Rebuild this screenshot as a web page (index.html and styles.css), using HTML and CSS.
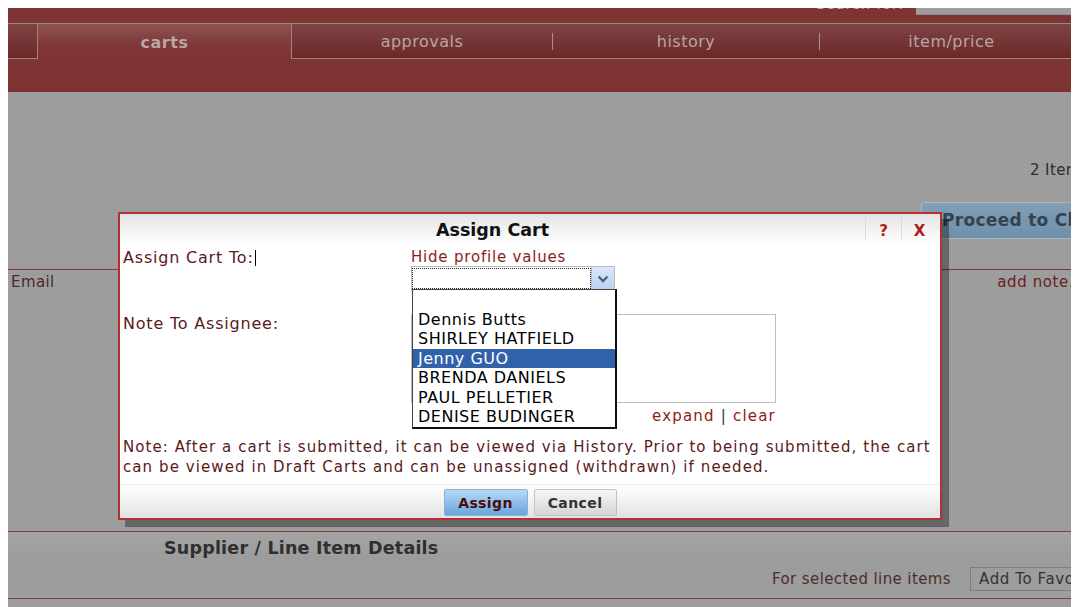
FILE: index.html
```html
<!DOCTYPE html>
<html lang="en">
<head>
<meta charset="utf-8">
<title>Carts</title>
<link rel="stylesheet" href="styles.css">
</head>
<body>
<div class="page">
  <header class="masthead">
    <div class="search-row">
      <span class="search-label">Search for:</span>
      <span class="search-box"></span>
    </div>
    <nav class="tabs">
      <span class="tab-stub"></span>
      <a class="tab tab-active">carts</a>
      <div class="tab-group">
        <a class="tab tab-approvals">approvals</a>
        <span class="tab-sep"></span>
        <a class="tab tab-history">history</a>
        <span class="tab-sep"></span>
        <a class="tab tab-price">item/price</a>
      </div>
    </nav>
  </header>

  <main class="content">
    <div class="cart-top">
      <div class="cart-aside">
        <div class="cart-summary">2 Items</div>
        <button class="proceed-btn">Proceed to Checkout</button>
      </div>
    </div>
    <div class="cart-fields">
      <span class="field-name">Email</span>
      <a class="add-note">add note...</a>
    </div>
    <section class="line-items">
      <h2 class="line-items-title">Supplier / Line Item Details</h2>
      <div class="bulk-actions">
        <span class="bulk-label">For selected line items</span>
        <span class="bulk-select">Add To Favorites</span>
      </div>
    </section>
  </main>
</div>

<div class="modal">
  <div class="modal-head">
    <div class="modal-title">Assign Cart</div>
    <a class="modal-ctl ctl-help">?</a>
    <a class="modal-ctl ctl-close">X</a>
  </div>
  <div class="modal-body">
    <div class="form-row">
      <div class="form-label">Assign Cart To:<span class="caret"></span></div>
      <div class="form-field">
        <a class="profile-link">Hide profile values</a>
        <div class="select">
          <span class="select-value"></span>
          <span class="select-arrow">
            <svg width="12" height="8" viewBox="0 0 12 8"><path d="M1.5 1.5 L6 6 L10.5 1.5" fill="none" stroke="#4d6185" stroke-width="2.4"/></svg>
          </span>
        </div>
      </div>
    </div>
    <div class="form-row note-row">
      <div class="form-label">Note To Assignee:</div>
      <div class="form-field">
        <div class="note-box"></div>
        <div class="note-tools"><a class="tool-link">expand</a> <span class="tool-sep">|</span> <a class="tool-link">clear</a></div>
      </div>
    </div>
    <p class="modal-note">Note: After a cart is submitted, it can be viewed via History. Prior to being submitted, the cart can be viewed in Draft Carts and can be unassigned (withdrawn) if needed.</p>
  </div>
  <div class="modal-foot">
    <button class="btn btn-primary">Assign</button>
    <button class="btn">Cancel</button>
  </div>

  <ul class="select-list">
    <li class="opt">&nbsp;</li>
    <li class="opt">Dennis Butts</li>
    <li class="opt">SHIRLEY HATFIELD</li>
    <li class="opt opt-selected">Jenny GUO</li>
    <li class="opt">BRENDA DANIELS</li>
    <li class="opt">PAUL PELLETIER</li>
    <li class="opt">DENISE BUDINGER</li>
  </ul>
</div>
</body>
</html>
```

FILE: styles.css
```css
html {
  overflow: hidden;
}

body {
  margin: 8px;
  background: #ffffff;
  font-family: "DejaVu Sans", Verdana, sans-serif;
  font-size: 15px;
}

.page {
  width: 1128px;
  height: 640px;
  background: #9d9d9d;
}

/* ---- red masthead ---- */
.masthead {
  height: 84px;
  background: #7f3434;
}

.search-row {
  height: 15px;
  display: flex;
  justify-content: flex-end;
  align-items: flex-start;
  overflow: hidden;
}

.search-label {
  margin-top: -12px;
  margin-right: 12px;
  line-height: 16px;
  color: #bfb0b0;
  letter-spacing: 0.6px;
}

.search-box {
  width: 220px;
  height: 6px;
  background: #9d9d9d;
  border-bottom: 1px solid #8d8d8d;
}

.tabs {
  display: flex;
  height: 36px;
}

.tab-stub {
  width: 29px;
  box-sizing: border-box;
  border-top: 1px solid #a38383;
  border-bottom: 1px solid #a38383;
  background: linear-gradient(#7d4444, #6e2727);
}

.tab {
  color: #b9a6a6;
  font-size: 16px;
  letter-spacing: 0.5px;
  text-decoration: none;
  text-align: center;
  line-height: 35px;
}

.tab-active {
  width: 255px;
  box-sizing: border-box;
  border: 1px solid #a38383;
  border-bottom: none;
  background: linear-gradient(#8e5454 0%, #7f3737 60%, #7f3434 100%);
  font-weight: bold;
  line-height: 37px;
}

.tab-group {
  flex: 1;
  display: flex;
  align-items: center;
  box-sizing: border-box;
  border-top: 1px solid #a38383;
  border-bottom: 1px solid #a38383;
  background: linear-gradient(#7d4545, #6e2727);
}

.tab-approvals {
  width: 260px;
}

.tab-history {
  width: 266px;
}

.tab-price {
  width: 263px;
}

.tab-sep {
  width: 1px;
  height: 17px;
  background: #a89090;
}

/* ---- dimmed page content ---- */
.content {
  color: #2b2b2b;
}

.cart-top {
  display: flex;
  justify-content: flex-end;
  height: 177px;
}

.cart-aside {
  width: 215px;
}

.cart-summary {
  margin-top: 69px;
  padding-left: 109px;
  line-height: 18px;
  letter-spacing: 0.4px;
  color: #2d2d2d;
  white-space: nowrap;
}

.proceed-btn {
  display: block;
  margin-top: 23px;
  width: 215px;
  height: 37px;
  padding: 0 0 2px 20px;
  text-align: left;
  border: 1px solid #a6b6c4;
  border-right: none;
  border-radius: 3px 0 0 0;
  background: linear-gradient(#829fb6, #6f8fa9);
  color: #34434f;
  font-family: inherit;
  font-size: 17px;
  font-weight: bold;
  letter-spacing: 0.3px;
  white-space: nowrap;
  overflow: hidden;
}

.cart-fields {
  height: 262px;
  box-sizing: border-box;
  border-top: 1px solid #8b3333;
  display: flex;
  justify-content: space-between;
  align-items: flex-start;
  padding: 3px 0 0 3px;
  line-height: 19px;
}

.field-name {
  color: #4d2727;
  letter-spacing: 0.4px;
}

.add-note {
  margin-right: 51px;
  color: #6a2121;
  letter-spacing: 0.6px;
}

.line-items {
  border-top: 1px solid #8b3838;
  border-bottom: 1px solid #8b3838;
  background: linear-gradient(#a4a4a4, #9c9c9c 40%, #9d9d9d);
  padding-bottom: 7px;
}

.line-items-title {
  margin: 0;
  padding: 5px 0 0 156px;
  font-size: 17.5px;
  line-height: 22px;
  color: #2f2f2f;
  letter-spacing: 0.2px;
}

.bulk-actions {
  margin-top: 8px;
  display: flex;
  align-items: center;
  padding-left: 764px;
  height: 24px;
  white-space: nowrap;
}

.bulk-label {
  color: #4f2c2c;
  letter-spacing: 0.4px;
}

.bulk-select {
  margin-left: 19px;
  height: 24px;
  box-sizing: border-box;
  border: 1px solid #7e7e7e;
  padding: 0 0 0 8px;
  line-height: 22px;
  color: #333;
  flex: 1;
  letter-spacing: 0.6px;
  overflow: hidden;
}

/* ---- Assign Cart dialog ---- */
.modal {
  position: absolute;
  left: 118px;
  top: 212px;
  width: 824px;
  height: 308px;
  box-sizing: border-box;
  border: 2px solid #b03232;
  background: #ffffff;
  box-shadow: 7px 7px 0 rgba(0, 0, 0, 0.35);
  display: flex;
  flex-direction: column;
}

.modal-head {
  height: 32px;
  display: flex;
  align-items: flex-start;
  background: linear-gradient(#e3e3e3, #f6f6f6 60%, #ffffff);
  padding-right: 3px;
}

.modal-title {
  flex: 1;
  text-align: center;
  font-weight: bold;
  font-size: 17.5px;
  line-height: 33px;
  color: #111;
}

.modal-ctl {
  width: 36px;
  height: 25px;
  box-sizing: border-box;
  border-left: 1px solid #dadada;
  text-align: center;
  line-height: 35px;
  font-weight: bold;
  font-size: 15px;
  color: #b41b1b;
}

.modal-body {
  padding: 0 0 0 3px;
  color: #5a1a1a;
}

.form-row {
  display: flex;
  align-items: flex-start;
}

.form-label {
  width: 288px;
  font-size: 16px;
  letter-spacing: 0.8px;
  line-height: 18px;
  padding-top: 3px;
  display: flex;
  align-items: center;
}

.caret {
  display: inline-block;
  width: 1px;
  height: 16px;
  margin-left: 1px;
  background: #000;
}

.form-field {
  display: flex;
  flex-direction: column;
}

.profile-link {
  line-height: 18px;
  padding-top: 2px;
  color: #8e1b1b;
  letter-spacing: 0.8px;
}

.select {
  width: 204px;
  height: 25px;
  box-sizing: border-box;
  border: 1px solid #b7bcc3;
  display: flex;
  background: #fff;
}

.select-value {
  flex: 1;
  border: 1px dotted #222;
  margin: 1px 0 1px 0;
}

.select-arrow {
  width: 22px;
  display: flex;
  align-items: center;
  justify-content: center;
  background: linear-gradient(#dbe8f7, #b8d0ee);
  border-left: 1px solid #a9bedb;
}

.note-row {
  margin-top: 23px;
}

.note-row .form-label {
  padding-top: 1px;
}

.note-box {
  width: 365px;
  height: 89px;
  box-sizing: border-box;
  border: 1px solid #bdbdbd;
}

.note-tools {
  margin-top: 4px;
  line-height: 18px;
  text-align: right;
  letter-spacing: 1.2px;
}

.tool-link {
  color: #8e1b1b;
}

.tool-sep {
  color: #333;
}

.modal-note {
  margin: 12px 0 0 0;
  line-height: 20px;
  padding-right: 4px;
  letter-spacing: 1.08px;
}

.modal-foot {
  margin-top: auto;
  height: 34px;
  box-sizing: border-box;
  border-top: 1px solid #eeeeee;
  background: linear-gradient(#ffffff, #f4f4f4 40%, #e2e2e2);
  display: flex;
  justify-content: center;
  align-items: flex-start;
  gap: 6px;
  padding-top: 4px;
}

.btn {
  width: 83px;
  height: 27px;
  border: 1px solid #c2c2c2;
  border-radius: 2px;
  background: linear-gradient(#f6f6f6, #d6d6d6);
  font-family: inherit;
  font-size: 14px;
  font-weight: bold;
  color: #333;
  letter-spacing: 0.4px;
  padding: 0;
}

.btn-primary {
  width: 84px;
  border-color: #8fb2d4;
  background: linear-gradient(#b9d8f4, #68a5de);
  color: #4c0a0a;
}

/* open drop-down of the assignee select */
.select-list {
  position: absolute;
  left: 292px;
  top: 75px;
  width: 205px;
  margin: 0;
  padding: 0;
  list-style: none;
  box-sizing: border-box;
  border: 1px solid #444;
  border-right: 2px solid #111;
  border-bottom: 2px solid #111;
  background: #fff;
}

.opt {
  height: 19.5px;
  line-height: 19.5px;
  padding-left: 5px;
  color: #000;
  font-size: 16px;
  letter-spacing: 0.5px;
  white-space: nowrap;
}

.opt-selected {
  background: #3162a9;
  color: #ffffff;
}
```
